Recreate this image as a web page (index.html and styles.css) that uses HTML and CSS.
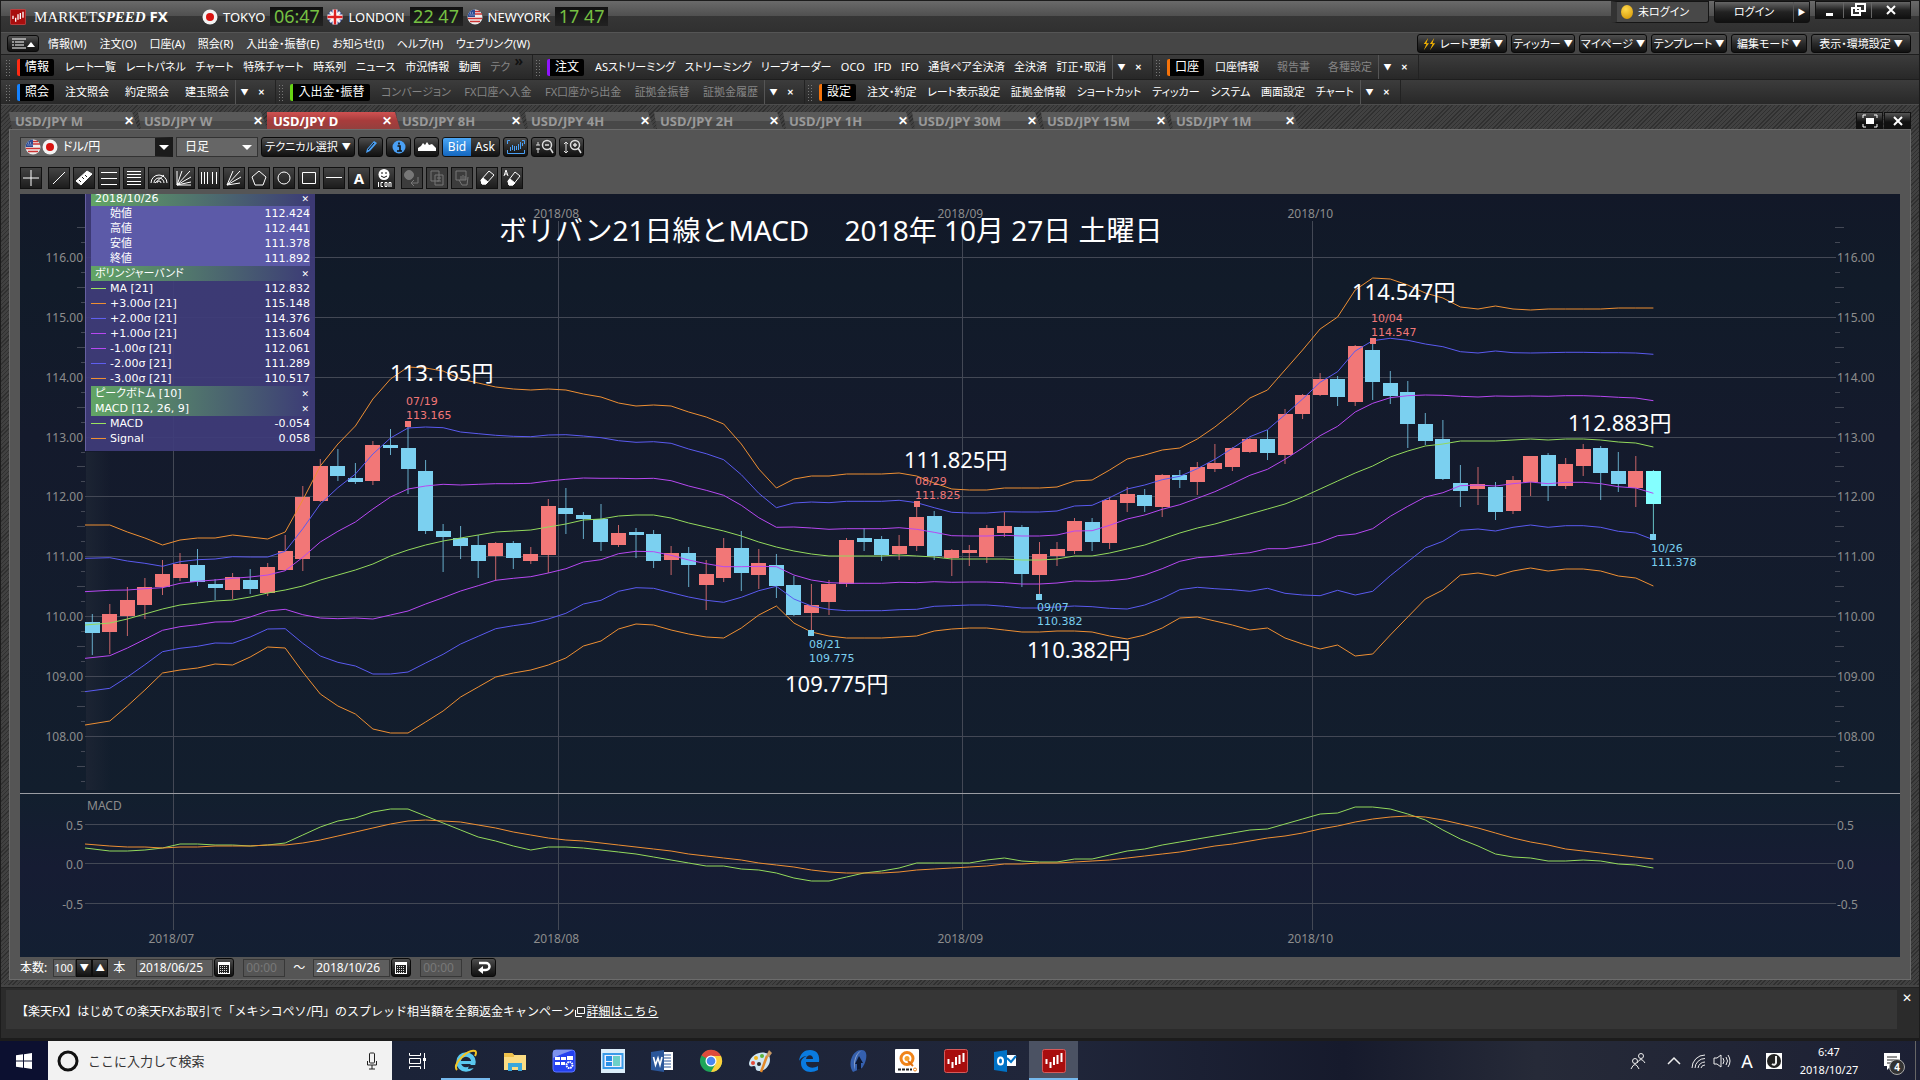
FILE: index.html
```html
<!DOCTYPE html>
<html lang="ja">
<head>
<meta charset="utf-8">
<title>MARKETSPEED FX</title>
<link rel="stylesheet" href="styles.css">
</head>
<body>
<svg class="defs" width="0" height="0" aria-hidden="true">
  <symbol id="jp" viewBox="0 0 16 16"><circle cx="8" cy="8" r="7.5" fill="#f3f3f3"/><circle cx="8" cy="8" r="4" fill="#d8120f"/></symbol>
  <symbol id="us" viewBox="0 0 16 16"><circle cx="8" cy="8" r="7.5" fill="#eee"/><path d="M1 9.5h14M8 5h7M7 2.500h6M3 12.500h10" stroke="#c33" stroke-width="1.500"/><path d="M.6 8A7.500 7.500 0 0 1 8 .5V8z" fill="#2b4b94"/><path d="M2.500 6h5M3 4h4" stroke="#fff" stroke-width=".7" stroke-dasharray="1 1"/></symbol>
  <symbol id="gb" viewBox="0 0 16 16"><circle cx="8" cy="8" r="7.5" fill="#2b3f8c"/><path d="M3 3l10 10M13 3L3 13" stroke="#eee" stroke-width="2.500"/><path d="M8 .5v15M.5 8h15" stroke="#fff" stroke-width="5"/><path d="M8 .5v15M.5 8h15" stroke="#d22" stroke-width="2.500"/></symbol>
  <symbol id="ms" viewBox="0 0 24 24"><rect x=".5" y=".5" width="23" height="23" rx="2" fill="#a80e0e" stroke="#d65a5a"/><path d="M4.500 10v5M8.500 13v6M12 8v8M15.500 6v9M19.500 4v9" stroke="#fff" stroke-width="2"/></symbol>
  <symbol id="cal" viewBox="0 0 14 14"><path d="M1 1h12v12H1z" fill="#fff"/><path d="M2 4h10v8H2z" fill="#222"/><path d="M3 5.500h8M3 7.500h8M3 9.500h8M3 11.500h8" stroke="#ddd" stroke-dasharray="1 1"/></symbol>
</svg>

<div class="app">
  <header class="titlebar">
    <svg class="logo"><use href="#ms"/></svg>
    <h1 class="brand">MARKET<em>SPEED</em> <b>FX</b></h1>
    <div class="city"><svg class="flag"><use href="#jp"/></svg>TOKYO<time>06:47</time></div>
    <div class="city"><svg class="flag"><use href="#gb"/></svg>LONDON<time>22 47</time></div>
    <div class="city"><svg class="flag"><use href="#us"/></svg>NEWYORK<time>17 47</time></div>
    <div class="session">
      <div class="status"><i class="lamp"></i>未ログイン</div>
      <div class="login"><button>ログイン</button><button class="arrow">▶</button></div>
      <div class="wins">
        <button aria-label="最小化"><svg viewBox="0 0 16 16"><path d="M4 11h7v3H4z" fill="#fff"/></svg></button>
        <button aria-label="元に戻す"><svg viewBox="0 0 16 16"><path d="M6 2h9v7H6zM2 6h8v7H2z" fill="#333" stroke="#fff" stroke-width="2"/></svg></button>
        <button class="wide" aria-label="閉じる"><svg viewBox="0 0 16 16"><path d="M4 4l8 8M12 4l-8 8" stroke="#fff" stroke-width="2"/></svg></button>
      </div>
    </div>
  </header>

  <nav class="menubar">
    <button class="btn listbtn" aria-label="一覧"><svg viewBox="0 0 28 14"><path d="M3 2h14M3 5h2m1 0h9M3 8h2m1 0h9M3 11h14" stroke="#fff"/><path d="M18 10l4-5 4 5z" fill="#fff"/></svg></button>
    <div class="menus">
      <a href="#">情報(M)</a><a href="#">注文(O)</a><a href="#">口座(A)</a><a href="#">照会(R)</a><a href="#">入出金・振替(E)</a><a href="#">お知らせ(I)</a><a href="#">ヘルプ(H)</a><a href="#">ウェブリンク(W)</a>
    </div>
    <div class="quick">
      <button class="btn w90"><svg class="bolt" viewBox="0 0 16 16"><path d="M7 1L2 8h3l-3 7 6-8H5zM14 1L9 8h3l-3 7 6-8h-3z" fill="#f5b400"/></svg>レート更新<i>▼</i></button>
      <button class="btn w64">ティッカー<i>▼</i></button>
      <button class="btn w68">マイページ<i>▼</i></button>
      <button class="btn w76">テンプレート<i>▼</i></button>
      <button class="btn w76">編集モード<i>▼</i></button>
      <button class="btn w100">表示・環境設定<i>▼</i></button>
    </div>
  </nav>

  <div class="bar bar-a">
    <div class="group red"><button class="tag">情報</button><div class="items"><a href="#">レート一覧</a><a href="#">レートパネル</a><a href="#">チャート</a><a href="#">特殊チャート</a><a href="#">時系列</a><a href="#">ニュース</a><a href="#">市況情報</a><a href="#">動画</a><a href="#" class="dim">テク</a></div><b class="more">»</b></div>
    <div class="group violet"><button class="tag">注文</button><div class="items"><a href="#">ASストリーミング</a><a href="#">ストリーミング</a><a href="#">リーブオーダー</a><a href="#">OCO</a><a href="#">IFD</a><a href="#">IFO</a><a href="#">通貨ペア全決済</a><a href="#">全決済</a><a href="#">訂正・取消</a></div><div class="ctl"><button>▼</button><button>✕</button></div></div>
    <div class="group orange"><button class="tag">口座</button><div class="items"><a href="#">口座情報</a><a href="#" class="dim">報告書</a><a href="#" class="dim">各種設定</a></div><div class="ctl"><button>▼</button><button>✕</button></div></div>
  </div>
  <div class="bar bar-b">
    <div class="group blue"><button class="tag">照会</button><div class="items"><a href="#">注文照会</a><a href="#">約定照会</a><a href="#">建玉照会</a></div><div class="ctl"><button>▼</button><button>✕</button></div></div>
    <div class="group green"><button class="tag long">入出金・振替</button><div class="items dim"><a href="#">コンバージョン</a><a href="#">FX口座へ入金</a><a href="#">FX口座から出金</a><a href="#">証拠金振替</a><a href="#">証拠金履歴</a></div><div class="ctl"><button>▼</button><button>✕</button></div></div>
    <div class="group orange"><button class="tag">設定</button><div class="items"><a href="#">注文・約定</a><a href="#">レート表示設定</a><a href="#">証拠金情報</a><a href="#">ショートカット</a><a href="#">ティッカー</a><a href="#">システム</a><a href="#">画面設定</a><a href="#">チャート</a></div><div class="ctl"><button>▼</button><button>✕</button></div></div>
  </div>

  <main class="workspace">
    <div class="tabs">
      <button class="tab">USD/JPY M<i>✕</i></button><button class="tab">USD/JPY W<i>✕</i></button><button class="tab on">USD/JPY D<i>✕</i></button><button class="tab">USD/JPY 8H<i>✕</i></button><button class="tab">USD/JPY 4H<i>✕</i></button><button class="tab">USD/JPY 2H<i>✕</i></button><button class="tab">USD/JPY 1H<i>✕</i></button><button class="tab">USD/JPY 30M<i>✕</i></button><button class="tab">USD/JPY 15M<i>✕</i></button><button class="tab">USD/JPY 1M<i>✕</i></button>
      <div class="tabwins">
        <button aria-label="最大化"><svg viewBox="0 0 16 14"><path d="M1 4V1h3M12 1h3v3M15 10v3h-3M4 13H1v-3" fill="none" stroke="#fff"/><path d="M4 4h8v6H4z" fill="#fff"/></svg></button>
        <button aria-label="閉じる"><svg viewBox="0 0 16 14"><path d="M4 3l8 8M12 3l-8 8" stroke="#fff" stroke-width="2"/></svg></button>
      </div>
    </div>

    <section class="panel">
      <div class="tools">
        <label class="pick pair"><span class="flags"><svg><use href="#us"/></svg><svg><use href="#jp"/></svg></span><select aria-label="通貨ペア"><option>ドル/円</option></select></label>
        <label class="pick span"><select aria-label="足種"><option>日足</option></select></label>
        <button class="btn tech">テクニカル選択<i>▼</i></button>
        <button class="btn ic" aria-label="描画"><svg viewBox="0 0 16 16"><path d="M3 14l1-4 7-8 3 2-7 8z" fill="#4aa0f5"/><path d="M5 11l6-7" stroke="#111"/></svg></button>
        <button class="btn ic" aria-label="情報"><svg viewBox="0 0 16 16"><circle cx="8" cy="8" r="6.5" fill="#4aa0f5"/><path d="M8 3.500v2M6.500 7H9v5M6 12h5" stroke="#111" stroke-width="1.600" fill="none"/></svg></button>
        <button class="btn ic" aria-label="面"><svg viewBox="0 0 20 16"><path d="M1 12V9l3-2 2-3 2 2 2-3 2 3 3-1 4 4v3z" fill="#fff"/></svg></button>
        <div class="toggle"><button class="on">Bid</button><button>Ask</button></div>
        <button class="btn ic" aria-label="期間"><svg viewBox="0 0 20 16"><path d="M4 1.500H1.500V5M16 1.500h2.500V5M1.500 11v3.500h17V11M4.500 8v4M6.500 6v5M8.500 7v5M10.500 7v4M12.500 5v6M14.500 3v7M16.500 4v3" fill="none" stroke="#4aa0f5"/></svg></button>
        <button class="btn ic" aria-label="縮小"><svg viewBox="0 0 20 16"><circle cx="13" cy="6" r="4.500" fill="none" stroke="#ddd" stroke-width="1.500"/><path d="M11 6h4M16 9l3 5" stroke="#ddd" stroke-width="1.500"/><path d="M4 3v3M4 9v5M2 6h4M2 10h4" stroke="#ddd"/></svg></button>
        <button class="btn ic" aria-label="拡大"><svg viewBox="0 0 20 16"><circle cx="13" cy="6" r="4.500" fill="none" stroke="#ddd" stroke-width="1.500"/><path d="M11 6h4M13 4v4M16 9l3 5" stroke="#ddd" stroke-width="1.500"/><path d="M4 3v11M2 5l2-2 2 2M2 12l2 2 2-2" stroke="#ddd" fill="none"/></svg></button>
      </div>

      <div class="draw">
        <button class="sq first" aria-label="十字"><svg viewBox="0 0 20 20"><path d="M10 2v16M2 10h16"/></svg></button>
        <button class="sq" aria-label="直線"><svg viewBox="0 0 20 20"><path d="M4 16L16 4"/></svg></button>
        <button class="sq" aria-label="定規"><svg viewBox="0 0 20 20"><path d="M2 13L13 3l5 3L7 17z" fill="#fff"/><path d="M5 12l2 2M8 9l2 2M11 7l2 2" stroke="#222"/></svg></button>
        <button class="sq" aria-label="平行線"><svg viewBox="0 0 20 20"><path d="M2 4.500h16M2 10.500h16M2 16.500h16"/></svg></button>
        <button class="sq" aria-label="水平線"><svg viewBox="0 0 20 20"><path d="M3 3.500h14M3 6.500h14M3 9.500h14M3 13.500h14M3 16.500h14"/></svg></button>
        <button class="sq" aria-label="弧"><svg viewBox="0 0 20 20"><path d="M2 15a8 8 0 0 1 16 0M5 15a5 5 0 0 1 10 0M8 15a2 2 0 0 1 4 0M6 15l9-8"/></svg></button>
        <button class="sq" aria-label="ファン"><svg viewBox="0 0 20 20"><path d="M3 3v14h14M3 17L8 3M3 17L16 3M3 17l14-8M3 17l14-3"/></svg></button>
        <button class="sq" aria-label="縦線"><svg viewBox="0 0 20 20"><path d="M2.500 4v12M5.500 4v12M8.500 4v12M13.500 4v12M17.500 4v12"/></svg></button>
        <button class="sq" aria-label="放射"><svg viewBox="0 0 20 20"><path d="M3 17L9 3M3 17L16 3M3 17l14-8M3 17l13-2"/></svg></button>
        <button class="sq" aria-label="多角形"><svg viewBox="0 0 20 20"><path d="M10 3l7 6-3 8H6L3 9z"/></svg></button>
        <button class="sq" aria-label="円"><svg viewBox="0 0 20 20"><circle cx="10" cy="10" r="6"/></svg></button>
        <button class="sq" aria-label="四角"><svg viewBox="0 0 20 20"><path d="M3.500 4.500h13v11h-13z"/></svg></button>
        <button class="sq" aria-label="横線"><svg viewBox="0 0 20 20"><path d="M2 9.500h16"/></svg></button>
        <button class="sq">A</button>
        <button class="sq" aria-label="アイコン"><svg viewBox="0 0 20 20"><circle cx="10" cy="6.500" r="5.500" fill="#fff" stroke="none"/><path d="M8 4v2M12 4v2M7 8q3 3 6 0" stroke="#111"/><path d="M4.500 14v5M9 14.500H7v4h2M11 14.500h2v4h-2zM15 19v-4.500h2V19"/></svg></button>
        <button class="sq off gap" disabled aria-label="履歴"><svg viewBox="0 0 20 20"><circle cx="7" cy="7" r="4.500" fill="#777"/><path d="M16 9v6h-6M12 12l-3 3 3 3"/></svg></button>
        <button class="sq off" disabled aria-label="複製"><svg viewBox="0 0 20 20"><path d="M4 3h8v10H4zM8 7h8v10H8zM10 10h4M10 13h4"/></svg></button>
        <button class="sq off" disabled aria-label="移動"><svg viewBox="0 0 20 20"><path d="M4 3h10v9H4zM9 12V8M11 12V7M13 12V8M7 12l3 5h5l1-8"/></svg></button>
        <button class="sq" aria-label="消去"><svg viewBox="0 0 20 20"><path d="M4 12l8-9 5 4-8 9H5z"/><path d="M4 12l2-2 5 4-2 2H5z" fill="#fff"/></svg></button>
        <button class="sq" aria-label="全消去"><svg viewBox="0 0 20 20"><path d="M2 8l2-6 2 6M3 6h2M6 13l7-9 5 4-7 9H7z"/><path d="M6 13l2-2 5 4-2 2H7z" fill="#fff"/></svg></button>
      </div>

      <div class="chartbox">
        <svg class="chart" id="chart" viewBox="20 194 1880 763" role="img" aria-label="USD/JPY 日足チャート">
          <defs>
            <linearGradient id="sky" x1="0" y1="0" x2="0" y2="1"><stop offset="0" stop-color="#121828"/><stop offset=".15" stop-color="#111b29"/><stop offset=".4" stop-color="#141a2c"/><stop offset="1" stop-color="#121e2d"/></linearGradient>
            <linearGradient id="deep" x1="0" y1="0" x2="0" y2="1"><stop offset="0" stop-color="#121f2e"/><stop offset=".45" stop-color="#161c33"/><stop offset="1" stop-color="#131f32"/></linearGradient>
            <linearGradient id="edge"><stop offset="0" stop-color="#1c2433"/><stop offset="1" stop-color="#1c2433" stop-opacity="0"/></linearGradient>
          </defs>
          <rect x="20" y="194" width="1880" height="600" fill="url(#sky)"/>
          <rect x="20" y="794" width="1880" height="163" fill="url(#deep)"/>
          <rect x="86" y="452" width="25" height="338" fill="url(#edge)"/>
          <g id="grid" class="grid"></g>
          <path class="divider" d="M20 793.500H1900"/>
          <g id="axis" class="axis"></g>
          <g id="candles"></g>
          <g id="lines" class="lines"></g>
          <g id="peaks" class="peaks"></g>
          <text class="axis-name axis" x="87" y="810">MACD</text>
          <text class="headline" x="499" y="241" xml:space="preserve">ボリバン21日線とMACD　 2018年 10月 27日 土曜日</text>
          <g class="notes">
            <text x="390" y="381">113.165円</text>
            <text x="904" y="468">111.825円</text>
            <text x="785" y="692">109.775円</text>
            <text x="1027" y="658">110.382円</text>
            <text x="1352" y="300">114.547円</text>
            <text x="1568" y="431">112.883円</text>
          </g>
        </svg>
        <table class="legend">
          <tr class="head"><th colspan="2">2018/10/26</th><td><button aria-label="閉じる">✕</button></td></tr>
          <tr class="ohlc"><td></td><th>始値</th><td>112.424</td></tr>
          <tr class="ohlc"><td></td><th>高値</th><td>112.441</td></tr>
          <tr class="ohlc"><td></td><th>安値</th><td>111.378</td></tr>
          <tr class="ohlc"><td></td><th>終値</th><td>111.892</td></tr>
          <tr class="head"><th colspan="2">ボリンジャーバンド</th><td><button aria-label="閉じる">✕</button></td></tr>
          <tr><td><i class="key ma"></i></td><th>MA [21]</th><td>112.832</td></tr>
          <tr><td><i class="key s3"></i></td><th>+3.00σ [21]</th><td>115.148</td></tr>
          <tr><td><i class="key s2"></i></td><th>+2.00σ [21]</th><td>114.376</td></tr>
          <tr><td><i class="key s1"></i></td><th>+1.00σ [21]</th><td>113.604</td></tr>
          <tr><td><i class="key s1"></i></td><th>-1.00σ [21]</th><td>112.061</td></tr>
          <tr><td><i class="key s2"></i></td><th>-2.00σ [21]</th><td>111.289</td></tr>
          <tr><td><i class="key s3"></i></td><th>-3.00σ [21]</th><td>110.517</td></tr>
          <tr class="head"><th colspan="2">ピークボトム [10]</th><td><button aria-label="閉じる">✕</button></td></tr>
          <tr class="head"><th colspan="2">MACD [12, 26, 9]</th><td><button aria-label="閉じる">✕</button></td></tr>
          <tr><td><i class="key ma"></i></td><th>MACD</th><td>-0.054</td></tr>
          <tr><td><i class="key s3"></i></td><th>Signal</th><td>0.058</td></tr>
        </table>
      </div>

      <div class="range">
        <label for="count">本数:</label>
        <span class="spin"><input id="count" value="100"><button>▼</button><button>▲</button></span>
        <span class="unit">本</span>
        <input class="date" aria-label="開始日" value="2018/06/25"><button class="btn calbtn" aria-label="カレンダー"><svg><use href="#cal"/></svg></button>
        <input class="time" aria-label="開始時刻" value="00:00" disabled>
        <span class="tilde">～</span>
        <input class="date" aria-label="終了日" value="2018/10/26"><button class="btn calbtn" aria-label="カレンダー"><svg><use href="#cal"/></svg></button>
        <input class="time" aria-label="終了時刻" value="00:00" disabled>
        <button class="btn ret" aria-label="更新"><svg viewBox="0 0 16 16"><path d="M3 3h7a3.500 3.500 0 0 1 0 7H6" fill="none" stroke="#fff" stroke-width="2.500"/><path d="M7 6v8l-5-4z" fill="#fff"/></svg></button>
      </div>
    </section>
  </main>

  <footer class="news">
    <p>【楽天FX】はじめての楽天FXお取引で「メキシコペソ/円」のスプレッド相当額を全額返金キャンペーン<svg viewBox="0 0 12 12"><path d="M3.500 1.500h7v6h-7zM1.500 4v6.500H8" fill="none" stroke="#fff"/></svg><a href="#">詳細はこちら</a></p>
    <button aria-label="閉じる">✕</button>
  </footer>
</div>

<div class="taskbar">
  <button class="start" aria-label="スタート"><svg viewBox="0 0 16 16"><path d="M0 2.300L7 1.300V7.500H0zM8 1.200L16 0v7.500H8zM0 8.500h7v6.200l-7-1zM8 8.500h8V16l-8-1.200z" fill="#fff"/></svg></button>
  <label class="search"><svg viewBox="0 0 22 22"><circle cx="11" cy="11" r="9" fill="none" stroke="#111" stroke-width="3"/></svg><input placeholder="ここに入力して検索"><svg class="mic" viewBox="0 0 12 18"><rect x="3.500" y="1" width="5" height="10" rx="1" fill="none" stroke="#222"/><path d="M1.500 9v4h9V9M6 13v4M3 17h6" fill="none" stroke="#222"/></svg></label>
  <button class="app-ic" aria-label="タスクビュー"><svg class="sm" viewBox="0 0 18 18"><path d="M1.500 1v2.500h11V1M1.500 6.500h11v5h-11zM1.500 17v-2.500h11V17M16.500 1v16" fill="none" stroke="#fff"/><path d="M15 6h3v3h-3z" fill="#fff"/></svg></button>
  <button class="app-ic run" aria-label="Internet Explorer"><svg viewBox="0 0 24 24"><circle cx="12" cy="13" r="7.500" fill="none" stroke="#5ac8ef" stroke-width="4.500"/><path d="M6 13.500h15" stroke="#5ac8ef" stroke-width="3"/><path d="M15 16h8l-2 3-7 1z" fill="#1c2436"/><path d="M3 21C-2 15 14 0 21 2q2 1 0 5" fill="none" stroke="#f3c526" stroke-width="2"/></svg></button>
  <button class="app-ic" aria-label="エクスプローラー"><svg viewBox="0 0 24 24"><path d="M1 4h8l2 2h12v15H1z" fill="#fbdc83"/><path d="M1 4h8l2 2v2H1z" fill="#efc14b"/><path d="M5 22v-8h14v8h-4v-4H9v4z" fill="#3aa7dc"/></svg></button>
  <button class="app-ic" aria-label="設定ツール"><svg viewBox="0 0 24 24"><rect x="1" y="1" width="22" height="22" rx="3" fill="#2440f0" stroke="#5a74ff"/><path d="M1 9V3q0-2 2-2h18q-9 3-20 8z" fill="#7d92ee"/><path d="M3 8h5v3H3zM9 8h5v3H9zM15 7h6v4h-6zM3 13h5v3H3zM9 13h4v3H9z" fill="#fff"/><circle cx="17.500" cy="16" r="3" fill="none" stroke="#fff" stroke-width="2" stroke-dasharray="1.600 .7"/></svg></button>
  <button class="app-ic" aria-label="ウィンドウ"><svg viewBox="0 0 24 24"><path d="M0 0h24v24H0z" fill="#dceefa"/><path d="M2.500 5h19v14h-19z" fill="#eef" stroke="#3a9be8" stroke-width="2"/><path d="M5 7h6v5H5zM5 13h6v4H5z" fill="#2a8fe6"/><path d="M12 7h7v10h-7z" fill="#6cd0c8"/></svg></button>
  <button class="app-ic" aria-label="Word"><svg viewBox="0 0 24 24"><path d="M12 3h11v18H12z" fill="#fff"/><path d="M14 6h7M14 9h7M14 12h7M14 15h7M14 18h7" stroke="#2b579a"/><path d="M1 3l13-2v22L1 21z" fill="#2b579a"/><path d="M3.500 8l2 8L8 9l2 7 2-8" fill="none" stroke="#fff" stroke-width="1.600"/></svg></button>
  <button class="app-ic" aria-label="Chrome"><svg viewBox="0 0 24 24"><circle cx="12" cy="12" r="11" fill="#1fa55a"/><path d="M12 12L2.500 6.500A11 11 0 0 1 22 7z" fill="#de4b3c"/><path d="M12 7h10a11 11 0 0 1-10 16l5-9z" fill="#fcd03c"/><circle cx="12" cy="12" r="5.500" fill="#fff"/><circle cx="12" cy="12" r="4.300" fill="#4a86f0"/></svg></button>
  <button class="app-ic" aria-label="ペイント"><svg viewBox="0 0 24 24"><path d="M1 14C3 5 14 1 20 5c5 6 0 17-9 17-5 0-2-5-5-5-4 1-5 0-5-3z" fill="#cfe6f3"/><circle cx="8" cy="9" r="2" fill="#f2b51d"/><circle cx="14" cy="7" r="2" fill="#5ab43c"/><circle cx="5" cy="14" r="2" fill="#e24b3a"/><circle cx="11" cy="15" r="2" fill="#2c2c2c"/><path d="M13 23l6-16" stroke="#e38a2a" stroke-width="2.500"/><path d="M18 7l3-6 3 3-3 4z" fill="#c99a66"/></svg></button>
  <button class="app-ic" aria-label="Edge"><svg viewBox="0 0 24 24"><path d="M2 12C3 4 8 1 13 1c7 0 10 5 9 12H9c0 6 7 7 12 4v4C14 25 4 23 4 14c0-4 3-6 6-7-4 0-7 3-8 5zm7-2h7c0-5-6-5-7 0z" fill="#0a7be0"/></svg></button>
  <button class="app-ic" aria-label="アプリ"><svg viewBox="0 0 24 24"><path d="M7 23C1 14 7 1 15 1c8-1 6 12 1 18z" fill="#3560ae"/><path d="M9 21C6 14 10 3 15 2c-5 3-7 12-6 19z" fill="#8fa3c8"/><path d="M13 7l4 7h-2v6l-4 1v-6H9z" fill="#0e1830"/></svg></button>
  <button class="app-ic" aria-label="チャート"><svg viewBox="0 0 24 24"><rect width="24" height="24" rx="1" fill="#fff"/><circle cx="12" cy="9.500" r="6" fill="none" stroke="#f08418" stroke-width="3"/><circle cx="12" cy="9.500" r="2.500" fill="#f6a02c"/><path d="M13 12l5 5" stroke="#e07010" stroke-width="2"/><path d="M3 20.500h14" stroke="#222" stroke-width="2" stroke-dasharray="3 1"/><circle cx="20" cy="20.500" r="1.500" fill="none" stroke="#f08418"/></svg></button>
  <button class="app-ic" aria-label="MARKETSPEED"><svg><use href="#ms"/></svg></button>
  <button class="app-ic" aria-label="Outlook"><svg viewBox="0 0 24 24"><path d="M13 6h10v11H13z" fill="#fff"/><path d="M14 9l4 4 5-6" fill="none" stroke="#0072c6" stroke-width="2"/><path d="M1 3l13-2v22L1 21z" fill="#0072c6"/><ellipse cx="7.500" cy="12" rx="2.500" ry="3.500" fill="none" stroke="#fff" stroke-width="2"/></svg></button>
  <button class="app-ic active" aria-label="MARKETSPEED FX"><svg><use href="#ms"/></svg></button>
  <div class="tray">
    <svg viewBox="0 0 18 18"><circle cx="12" cy="4" r="2.500"/><path d="M8 11q4-7 8 0"/><circle cx="6" cy="9" r="2.500"/><path d="M2 17q4-9 8 0"/></svg>
    <svg viewBox="0 0 18 18"><path d="M3 12l6-6 6 6" stroke-width="1.500"/></svg>
    <svg viewBox="0 0 18 18"><path d="M3 16A13 13 0 0 1 16 3M6 16A10 10 0 0 1 16 6.500M9 16a7 7 0 0 1 7-6M12 16a4 4 0 0 1 4-3"/></svg>
    <svg viewBox="0 0 18 18"><path d="M1 6h3l4-3v12l-4-3H1zM10 6q2 3 0 6M13 5q3 4 0 8M15 3q4 6 0 12"/></svg>
    <span class="ime">A</span>
    <svg viewBox="0 0 18 18"><path d="M1 1h16v16H1z" fill="#fff" stroke="none"/><circle cx="9" cy="9" r="7" fill="#222" stroke="none"/><path d="M11 4v7q-1 3-4 1" stroke-width="2"/></svg>
    <div class="clock">6:47<br>2018/10/27</div>
    <div class="notice"><svg viewBox="0 0 18 18"><path d="M1 1h16v13H8l-4 4v-4H1z" fill="#fff" stroke="none"/><path d="M4 5h10M4 8h10M4 11h7" stroke="#222"/></svg><span>4</span></div>
  </div>
</div>
<script src="chart.js"></script>
</body>
</html>
```
FILE: styles.css
```css
* { box-sizing: border-box; }
body {
  margin: 0;
  min-height: 100vh;
  display: flex;
  flex-direction: column;
  background: #2e2e2e;
  color: #fff;
  font: 12px/16px "Noto Sans", "Noto Sans CJK JP", sans-serif;
}
button, input, select { font: inherit; color: inherit; margin: 0; padding: 0; border: 0; background: none; white-space: nowrap; }
a { color: inherit; text-decoration: none; white-space: nowrap; }
svg { display: block; flex: none; }
.defs { position: absolute; }
i { font-style: normal; }

.app { flex: 1; display: flex; flex-direction: column; border: 1px solid #1c1c1c; border-bottom-width: 3px; background: #444; }

.titlebar { display: flex; align-items: center; height: 31px; padding-left: 9px; background: linear-gradient(#6a6a6a, #505050 48%, #363636 50%, #303030); }
.logo { width: 16px; height: 16px; }
.brand { margin: 0 0 0 8px; width: 168px; font: 15px/20px "Liberation Serif", serif; white-space: nowrap; }
.brand em { font-weight: bold; }
.brand b { font: bold 15px "Noto Sans", sans-serif; }
.city { display: flex; align-items: center; gap: 5px; margin-right: 4px; font-size: 13px; }
.flag { width: 16px; height: 16px; }
.city time { width: 53px; height: 19px; background: linear-gradient(#111, #222); color: #76c043; font-size: 18px; line-height: 18px; text-align: center; white-space: pre; }
.session { display: flex; align-self: flex-start; margin-left: auto; gap: 5px; padding-right: 8px; font-size: 11px; font-feature-settings: "palt"; }
.status { display: flex; align-items: center; gap: 5px; width: 98px; height: 22px; padding-left: 4px; background: #484848; border: 1px solid #151515; border-left: 6px solid #333; border-radius: 0 0 3px 3px; }
.lamp { width: 12px; height: 14px; border-radius: 50%; background: radial-gradient(circle at 40% 30%, #ffd84a, #d09000); }
.login { display: flex; height: 22px; background: linear-gradient(#666, #222 50%, #111); border: 1px solid #111; border-radius: 0 0 3px 3px; }
.login button { width: 78px; }
.login .arrow { width: 16px; border-left: 1px solid #555; font-size: 8px; }
.wins { display: flex; height: 18px; background: linear-gradient(#666, #222 50%, #111); border: 1px solid #111; }
.wins button { width: 28px; border-right: 1px solid #666; }
.wins .wide { width: 38px; border: 0; }
.wins svg { width: 16px; height: 16px; margin: 0 auto; }

.menubar { display: flex; align-items: center; height: 22px; padding: 0 8px 0 6px; border-top: 1px solid #555; background: #464646; font-size: 11px; font-feature-settings: "palt"; }
.btn { display: flex; align-items: center; justify-content: center; gap: 4px; height: 19px; border: 1px solid #0a0a0a; border-radius: 3px; background: linear-gradient(#4e4e4e, #2a2a2a 50%, #111); }
.btn i { font-size: 9px; }
.listbtn { width: 32px; height: 17px; }
.listbtn svg { width: 28px; height: 14px; }
.menus { display: flex; justify-content: space-between; width: 482px; margin-left: 9px; }
.quick { display: flex; gap: 4px; margin-left: auto; }
.quick .btn { gap: 3px; }
.bolt { width: 16px; height: 14px; }
.w90 { width: 90px; } .w64 { width: 64px; } .w68 { width: 68px; } .w76 { width: 76px; } .w100 { width: 100px; }

.bar { display: grid; height: 25px; padding-left: 2px; border-top: 1px solid #1e1e1e; background: linear-gradient(#3c3c3c, #282828); font-size: 12px; font-feature-settings: "palt"; }
.bar-a { grid-template-columns: 530px 620px 266px; }
.bar-b { grid-template-columns: 273px 529px 596px; }
.group { display: flex; align-items: center; border-right: 1px solid #222; padding-right: 9px; min-width: 0; }
.group::before { content: ""; width: 7px; height: 17px; margin: 0 5px 0 2px; background: radial-gradient(#777 1px, transparent 1px) 0 0/3px 3px; }
.tag { width: 37px; height: 17px; border-left: 3px solid; border-radius: 2px; background: #000; margin-right: 11px; line-height: 16px; flex: none; }
.tag.long { width: 80px; }
.red .tag { border-color: #ff2a12; } .violet .tag { border-color: #9013fe; } .orange .tag { border-color: #f5730a; } .blue .tag { border-color: #1482ff; } .green .tag { border-color: #66d414; }
.tag { color: #fff; }
.items { flex: 1; display: flex; justify-content: space-between; min-width: 0; font-size: 11px; }
.dim { color: #858585; }
.more { margin: -12px 0 0 4px; font-size: 14px; color: #111; }
.ctl { display: flex; align-items: center; gap: 8px; height: 100%; margin-left: 6px; padding-left: 4px; border-left: 1px solid #555; font-size: 8px; font-weight: bold; }
.ctl button { width: 9px; }

.workspace { flex: 1; padding: 7px 8px 5px; border-top: 1px solid #4c4c4c; background: repeating-linear-gradient(135deg, #303030 0 1px, #414141 1px 3px); }
.tabs { display: flex; height: 17px; }
.tab { display: flex; align-items: center; justify-content: space-between; width: 129px; padding: 0 4px 0 6px; background: linear-gradient(#5a5a5a 50%, #484848 50%); clip-path: polygon(0 0, 123px 0, 129px 100%, 3px 100%); color: #999; font: bold 13px/16px "Noto Sans", sans-serif; }
.tab.on { width: 133px; margin-right: -4px; padding-right: 8px; clip-path: polygon(0 0, 128px 0, 133px 100%, 0 100%); background: linear-gradient(#d05252, #a83c3c 50%, #94403e); color: #fff; z-index: 1; }
.tab i { color: #fff; font-size: 12px; }
.tabwins { display: flex; gap: 1px; margin-left: auto; }
.tabwins button { width: 27px; height: 17px; border: 1px solid #111; background: linear-gradient(#555, #111 60%); }
.tabwins svg { width: 16px; height: 14px; margin: 0 auto; }

.panel { padding: 7px 10px 1px; border: 1px solid #6b6b6b; background: #555; }
.tools { display: flex; height: 20px; gap: 3px; font-size: 12px; font-feature-settings: "palt"; }
.pick { position: relative; display: block; background: #666; border: 1px solid #333; }
.pick select { width: 100%; height: 18px; appearance: none; }
.pick::after { content: ""; position: absolute; right: 5px; top: 7px; border: 5px solid transparent; border-top-color: #fff; border-bottom: 0; }
.pair { width: 153px; border-right: 18px solid #1b1b1b; }
.pair::after { right: -14px; }
.pair select { padding-left: 42px; }
.span { width: 82px; }
.span select { padding-left: 8px; }
.flags { position: absolute; left: 4px; top: 1px; display: flex; gap: 1px; }
.flags svg { width: 16px; height: 16px; }
.tools .btn { height: 20px; }
.tech { width: 94px; font-size: 11px; }
.ic { width: 25px; }
.ic svg { width: 20px; height: 16px; }
.toggle { display: flex; border: 1px solid #111; border-radius: 3px; overflow: hidden; background: linear-gradient(#444, #111); }
.toggle button { width: 28px; }
.toggle .on { background: linear-gradient(#4aa6f5, #1467c0); }

.draw { display: flex; gap: 3px; margin-top: 10px; height: 22px; }
.sq { width: 22px; height: 22px; border: 1px solid #111; background: linear-gradient(#444, #1c1c1c); font-weight: bold; font-size: 15px; }
.sq svg { width: 20px; height: 20px; fill: none; stroke: #fff; stroke-width: 1; }
.sq.first { margin-right: 3px; }
.sq.gap { margin-left: 3px; }
.sq.off { background: #3c3c3c; }
.off svg { stroke: #777; }

.chartbox { position: relative; overflow: hidden; margin-top: 5px; }
.chart { width: 100%; height: auto; }
.grid path { stroke: #434855; stroke-width: 1; shape-rendering: crispEdges; }
.divider { stroke: #9a9da3; stroke-width: 1; }
.axis { fill: #8d8d8d; font-size: 12px; }
.lines polyline { fill: none; stroke-width: 1; }
.up { fill: #f27777; stroke: #f27777; }
.down { fill: #7bd0f0; stroke: #7bd0f0; }
.last { fill: #84ffff; stroke: #7beaea; }
.peaks { font: 11px "DejaVu Sans", sans-serif; }
.peaks .up, .peaks .down { stroke: none; }
.headline { fill: #fff; font-size: 28px; white-space: pre; }
.notes { fill: #fff; font-size: 22px; }

.legend { position: absolute; left: 65px; top: -3px; width: 230px; padding: 0 5px 5px; border-spacing: 0; border-left: 1px solid #6660a0; background: rgba(64, 60, 122, .93); font: 11px/15px "DejaVu Sans", "Noto Sans CJK JP", sans-serif; font-feature-settings: "palt"; }
.legend tr { height: 15px; }
.legend th { text-align: left; font-weight: normal; padding: 0; height: 15px; line-height: 14px; }
.legend td { padding: 0; height: 15px; text-align: right; line-height: 14px; }
.legend td:first-child { width: 19px; }
.legend .head { background: linear-gradient(90deg, #62a565, #3c3c76); }
.legend .head th { padding-left: 4px; }
.legend .head button { font-size: 9px; line-height: 14px; height: 14px; padding-right: 1px; vertical-align: top; }
.legend .ohlc { background: #5c5aa8; }
.key { display: block; width: 15px; height: 1px; background: currentColor; }
.ma { color: #9be35f; } .s3 { color: #ee8f33; } .s2 { color: #5e5ef0; } .s1 { color: #b748f2; }

.range { display: flex; align-items: center; height: 21px; }
.range input { height: 18px; border: 1px solid #383838; background: #5e5e5e; }
.spin { display: flex; margin-left: 6px; }
.spin #count { width: 23px; font-size: 11px; }
.spin button { width: 16px; height: 18px; border: 1px solid #0c0c0c; background: linear-gradient(#444, #111); font-size: 9px; }
.unit { width: 28px; padding-left: 5px; }
.range .date { width: 77px; padding-left: 2px; }
.calbtn { width: 20px; margin: 0 9px 0 1px; }
.calbtn svg { width: 14px; height: 14px; }
.range .time { width: 42px; padding-left: 2px; color: #787878; background: #555; }
.tilde { width: 28px; text-align: center; }
.ret { width: 25px; margin-left: 9px; }
.ret svg { width: 16px; height: 16px; }

.news { display: flex; height: 51px; margin-top: 2px; border-top: 1px solid #222; padding: 2px 2px 9px 5px; background: #2b2b2b; }
.news p { flex: 1; display: flex; align-items: center; margin: 0; padding: 4px 0 0 10px; background: #363636; }
.news svg { width: 12px; height: 12px; }
.news a { text-decoration: underline; }
.news button { width: 20px; height: 16px; }

.taskbar { display: flex; align-items: center; height: 40px; background: linear-gradient(90deg, #10183c, #1b2338 20%, #20263a 55%, #161a2c 70%, #262a38 80%, #1c2034); }
.start { width: 48px; height: 40px; background: #0c1030; }
.start svg { width: 16px; height: 16px; margin: 0 auto; }
.search { display: flex; align-items: center; width: 344px; height: 40px; padding: 0 14px 0 9px; background: #f2f2f2; color: #333; }
.search svg { width: 22px; height: 22px; }
.search input { flex: 1; min-width: 0; margin-left: 9px; font-size: 13px; outline: 0; }
.search input::placeholder { color: #333; opacity: 1; }
.search .mic { width: 12px; height: 18px; }
.app-ic { width: 49px; height: 40px; border-bottom: 3px solid transparent; padding-top: 3px; }
.app-ic svg { width: 24px; height: 24px; margin: 0 auto; }
.app-ic .sm { width: 18px; height: 18px; }
.run { border-color: #76b9ed; }
.active { border-color: #76b9ed; background: #4b5263; }
.tray { display: flex; align-items: center; margin-left: auto; border-right: 1px solid #666; margin-right: 4px; height: 40px; gap: 6px; }
.tray svg { width: 18px; height: 18px; fill: none; stroke: #eee; }
.tray svg:first-child { margin-right: 12px; }
.ime { width: 20px; margin-right: 2px; text-align: center; font-size: 18px; }
.clock { width: 80px; text-align: center; font: 11px/18px "Noto Sans", sans-serif; }
.notice { position: relative; width: 40px; padding-left: 8px; }
.notice span { position: absolute; left: 14px; top: 7px; width: 16px; height: 16px; border: 1px solid #aaa; border-radius: 50%; background: #333; font: bold 10px/14px "Noto Sans", sans-serif; text-align: center; }
```
FILE: chart.js
```js
const STEP = 17.54, X0 = 92.3, LEFT = 85, RIGHT = 1836;
const x = i => X0 + STEP * i;
const put = (id, html) => { document.getElementById(id).innerHTML = html; };

// One candle per trading day: direction, high, body top, body bottom, low.
const candles = `d614,622,633,655 u604,614,632,654 u587,600,616,636 u578,587,605,619 u560,574,587,595
u553,564,578,581 d549,565,582,586 d579,584,588,600 u573,577,590,599 d569,580,589,594
u563,567,593,596 u535,551,570,570 u486,497,559,571 u459,466,501,502 d449,466,476,481
d463,478,482,484 u441,445,481,485 d429,445,448,455 d424,448,469,494 d460,471,531,534
d524,531,537,572 d526,538,546,559 d535,545,561,578 u542,543,556,581 d541,543,558,569
u547,554,561,564 u499,506,555,573 d488,508,514,534 d512,515,519,539 d504,519,542,551
u525,533,545,547 d528,532,535,558 d530,534,561,568 u546,553,560,575 d547,553,565,587
u560,574,585,610 u538,548,578,582 d531,548,573,591 u549,563,575,589 d554,565,586,598
d576,585,615,616 u584,605,613,633 u580,584,602,615 u538,540,584,587 d528,538,542,551
d536,539,555,561 u535,546,554,560 u502,517,546,551 d511,516,556,560 u549,550,558,576
u545,550,553,566 u525,528,557,563 u512,526,533,537 d525,527,574,587 u542,554,575,597
u542,549,556,566 u518,521,551,554 d518,522,542,551 u497,500,543,549 u487,494,503,512
d489,495,506,512 u474,475,507,517 d470,475,480,488 u462,467,482,495 u444,463,469,472
u447,448,467,471 u438,439,452,453 d430,439,453,460 u409,414,455,464 u394,395,414,419
u373,379,395,396 d376,379,397,406 u345,346,402,406 d341,350,382,400 d371,383,396,404
d381,392,424,448 d413,424,441,445 d420,439,479,480 d465,483,491,507 u467,484,489,505
d482,487,512,520 u476,480,511,514 u456,456,482,496 d453,455,486,501 u458,464,486,489
u444,449,466,476 d446,448,473,500 d452,471,484,492 u456,471,488,507 x470,471,504,536`.split(/\s+/);

const ma = [625,623,619,614,609,605,603,601,600,597,593,590,586,580,575,570,564,556,550,545,541,538,535,532,531,530,527,524,520,519,516,515,515,518,523,527,531,536,542,547,551,554,556,556,556,556,555,556,557,559,559,559,559,560,560,559,556,556,553,549,545,539,533,528,524,519,514,509,504,497,489,481,473,466,457,451,446,444,441,441,441,440,439,440,439,439,440,442,443,447];
const upper = [525,525,532,538,545,540,538,538,535,537,539,532,500,466,444,426,399,379,367,368,371,379,383,387,389,390,389,390,394,397,403,406,405,406,412,417,424,444,469,488,479,476,476,474,474,474,473,476,483,489,490,490,488,488,488,487,481,480,470,459,455,450,448,439,427,413,398,390,370,350,329,317,290,278,279,285,293,298,307,309,306,309,310,309,309,309,309,308,308,308];
const macd = [848,851,851,850,848,844,844,845,845,846,845,843,835,827,821,818,812,809,809,816,823,830,837,841,846,850,847,847,848,850,852,854,857,860,863,866,866,869,870,873,878,881,881,877,873,871,868,863,863,863,863,860,858,861,862,862,859,859,855,851,849,845,842,839,836,833,830,829,824,819,814,813,807,807,809,814,820,830,839,846,854,857,858,861,861,860,861,864,865,868];
const signal = [844,846,847,847,848,847,847,846,846,846,845,845,843,840,836,832,828,824,821,820,821,822,825,828,832,835,838,840,841,843,845,847,849,851,854,856,858,860,863,865,867,870,872,873,873,873,872,870,869,868,867,866,864,864,863,863,862,861,860,858,856,854,852,849,846,844,841,838,836,833,829,826,822,819,817,816,817,820,824,828,833,838,842,845,849,851,853,855,857,859];

// Month lines, price lines and the scale ticks on both sides.
const priceY = p => Math.round(257 + (116 - p) * 59.85) + 0.5;
let grid = '', axis = '';
[['07', 173.5], ['08', 558.5], ['09', 962.5], ['10', 1312.5]].forEach(([m, gx]) => {
  grid += `<path d="M${gx} 221V930"/>`;
  axis += `<text x="${gx - 25}" y="218">2018/${m}</text><text x="${gx - 25}" y="943">2018/${m}</text>`;
});
for (let p = 107.25; p <= 116.5; p += 0.25) {
  const y = priceY(p);
  if (p % 1 === 0) {
    grid += `<path d="M${LEFT} ${y}H${RIGHT}"/>`;
    axis += `<text x="83" y="${y + 4}" text-anchor="end">${p.toFixed(2)}</text><text x="1837" y="${y + 4}">${p.toFixed(2)}</text>`;
  } else {
    const half = p % 1 === 0.5;
    grid += `<path d="M${half ? 77 : 81} ${y}H85M1835 ${y}H${half ? 1844 : 1840}"/>`;
  }
}
[['0.5', 824.5], ['0.0', 863.5], ['-0.5', 903.5]].forEach(([t, y]) => {
  grid += `<path d="M${LEFT} ${y}H${RIGHT}"/>`;
  axis += `<text x="83" y="${y + 5}" text-anchor="end">${t}</text><text x="1837" y="${y + 5}">${t}</text>`;
});
put('grid', grid);
put('axis', axis);

const kind = { u: 'up', d: 'down', x: 'last' };
put('candles', candles.map((c, i) => {
  const [hi, top, bottom, lo] = c.slice(1).split(',').map(Number);
  const left = Math.round(x(i) - 7.5);
  return `<g class="${kind[c[0]]}"><path d="M${x(i).toFixed(1)} ${hi}V${lo}" stroke-opacity=".8"/><rect x="${left}" y="${top}" width="15" height="${Math.max(2, bottom - top)}" stroke="none"/></g>`;
}).join(''));

// The bands are multiples of one deviation either side of the average.
const line = (ys, color) => `<polyline stroke="${color}" points="${LEFT},${ys[0]} ${ys.map((y, i) => i ? x(i).toFixed(1) + ',' + y.toFixed(1) : '').join(' ')}"/>`;
const band = k => ma.map((m, i) => m - (m - upper[i]) * k / 3);
put('lines', [3, -3].map(k => line(band(k), '#ee8f33')).join('')
  + [2, -2].map(k => line(band(k), '#5a5af0')).join('')
  + [1, -1].map(k => line(band(k), '#b748f2')).join('')
  + line(ma, '#93d95c') + line(macd, '#93d95c') + line(signal, '#ee8f33'));

put('peaks', [
  ['up', 18, 424, '07/19', '113.165', 405], ['up', 47, 504, '08/29', '111.825', 485], ['up', 73, 341, '10/04', '114.547', 322],
  ['down', 41, 633, '08/21', '109.775', 648], ['down', 54, 597, '09/07', '110.382', 611], ['down', 89, 537, '10/26', '111.378', 552]
].map(([cls, i, y, day, price, ty]) =>
  `<g class="${cls}"><rect x="${Math.round(x(i)) - 3}" y="${y - 3}" width="6" height="6"/><text x="${Math.round(x(i)) - 2}" y="${ty}">${day}</text><text x="${Math.round(x(i)) - 2}" y="${ty + 14}">${price}</text></g>`
).join(''));
```
